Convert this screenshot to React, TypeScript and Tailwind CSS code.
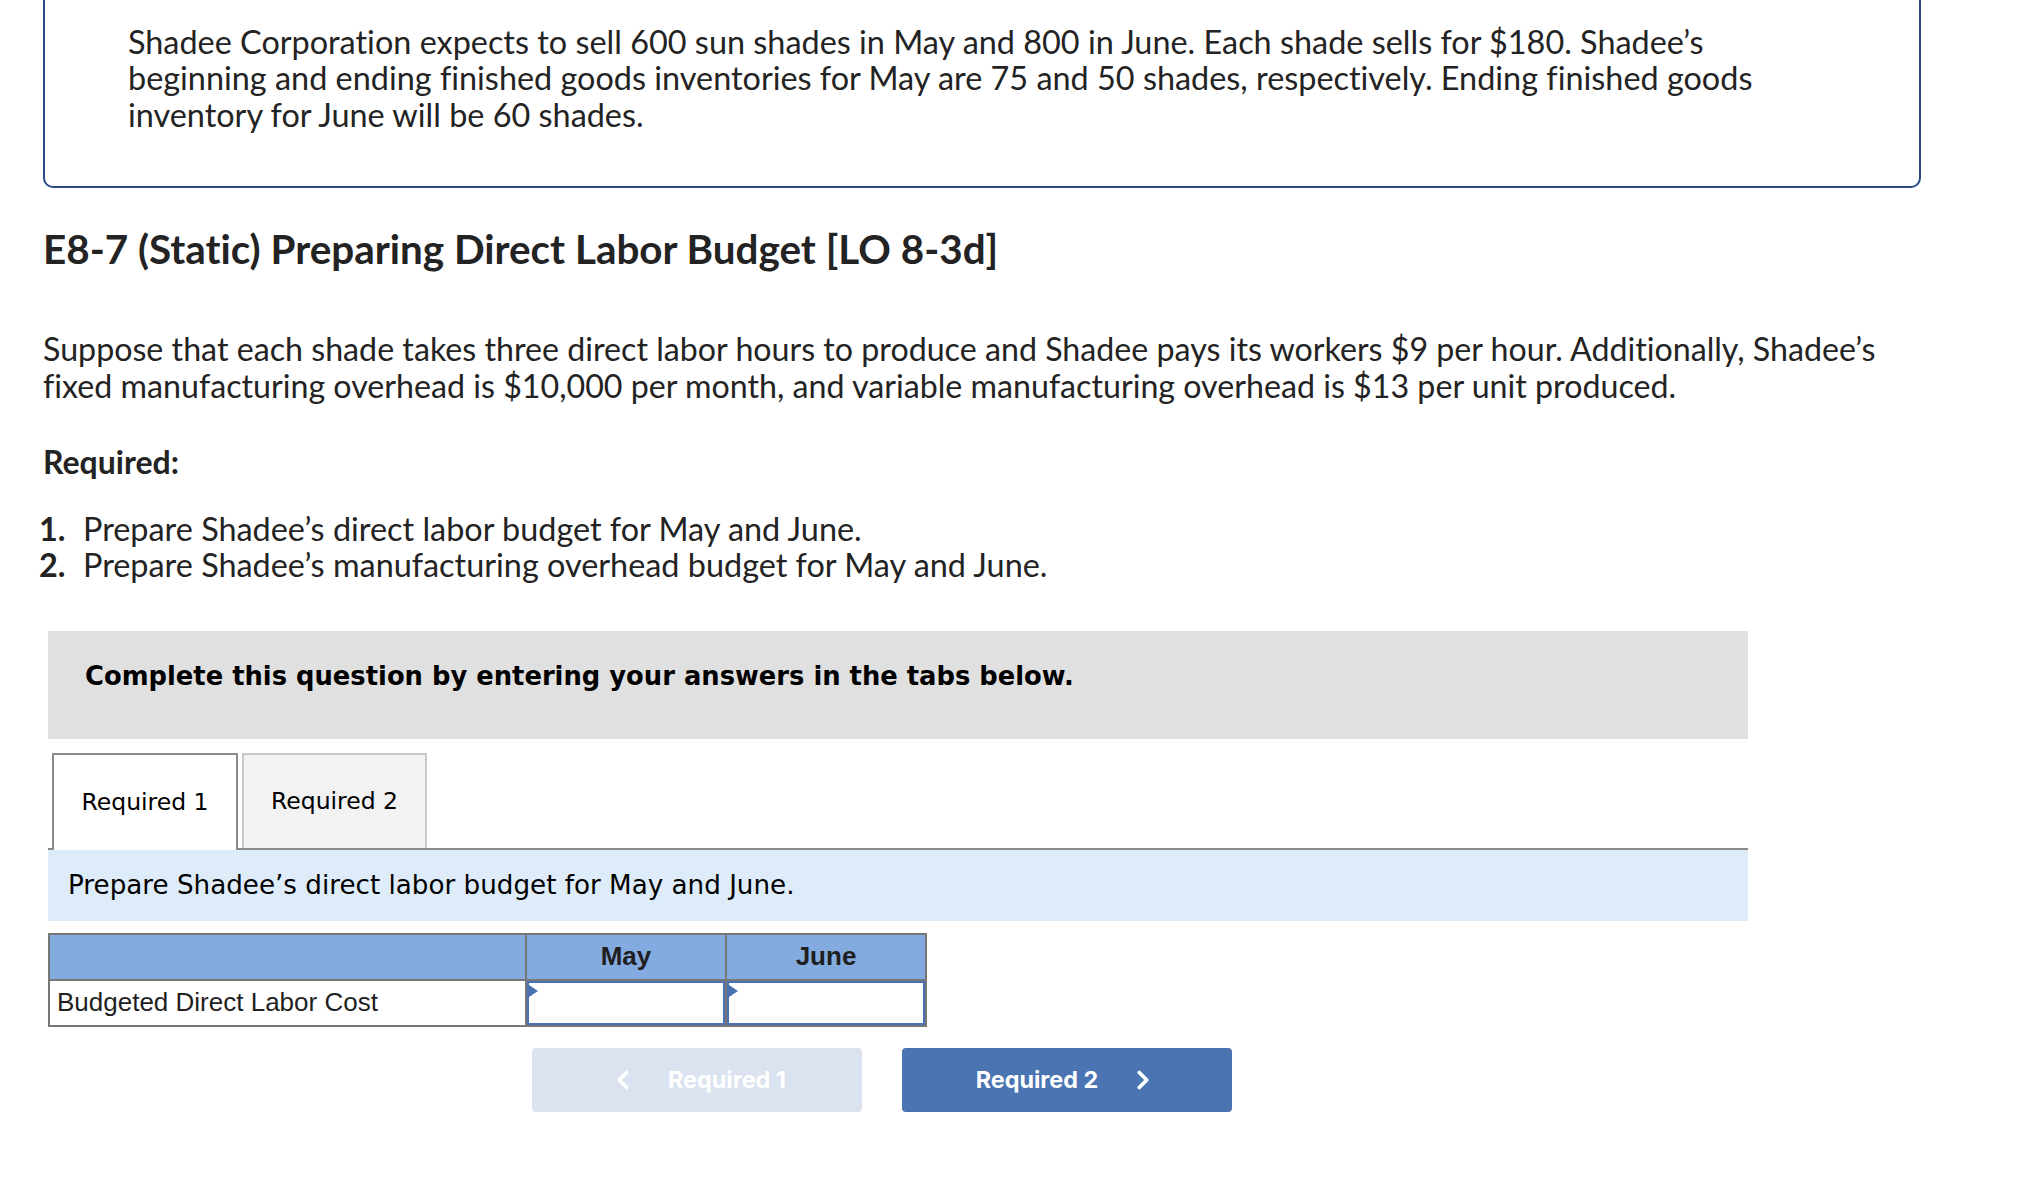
import { ChevronLeft, ChevronRight } from "lucide-react";

const proxima = "font-['Lato','Open_Sans',sans-serif] [font-variant-ligatures:none]";
const verdana = "font-['DejaVu_Sans','Verdana',sans-serif]";
const arial = "font-['Liberation_Sans','Arial',sans-serif]";

function AnswerCell() {
  return (
    <td className="border-2 border-[#777777] p-0 h-[46px]">
      <div className="relative h-full w-full border-2 border-[#4a72b2] bg-white">
        {/* little flag marking an input cell */}
        <span className="absolute left-0 top-[2px] h-0 w-0 border-y-[6px] border-l-[9px] border-y-transparent border-l-[#4a72b2]" />
      </div>
    </td>
  );
}

export default function App() {
  return (
    <div className="min-h-screen bg-white text-[#232323]">
      {/* Intro box (continued from above) */}
      <div
        className={`ml-[43px] w-[1878px] border-x-2 border-b-2 border-[#2a4a85] rounded-b-[10px] pl-[83px] pr-[120px] pt-[24px] pb-[53px] ${proxima} text-[32.4px] leading-[36.4px]`}
      >
        Shadee Corporation expects to sell 600 sun shades in May and 800 in June. Each shade sells for $180.
        Shadee’s beginning and ending finished goods inventories for May are 75 and 50 shades, respectively.
        Ending finished goods inventory for June will be 60 shades.
      </div>

      <div className={`pl-[43px] w-[1921px] ${proxima}`}>
        <h1 className="mt-[39px] text-[40.4px] leading-[44px] font-bold">
          E8-7 (Static) Preparing Direct Labor Budget [LO 8-3d]
        </h1>

        <p className="mt-[60px] text-[32.2px] leading-[36.4px]">
          Suppose that each shade takes three direct labor hours to produce and Shadee pays its workers $9 per
          hour. Additionally, Shadee’s fixed manufacturing overhead is $10,000 per month, and variable
          manufacturing overhead is $13 per unit produced.
        </p>

        <p className="mt-[40px] text-[32px] leading-[36px] font-bold">Required:</p>

        <ol className="mt-[31px] text-[32.4px] leading-[36.4px]">
          <li className="flex">
            <span className="w-[24px] -ml-[4px] text-right font-bold">1.</span>
            <span className="ml-[20px]">Prepare Shadee’s direct labor budget for May and June.</span>
          </li>
          <li className="flex">
            <span className="w-[24px] -ml-[4px] text-right font-bold">2.</span>
            <span className="ml-[20px]">Prepare Shadee’s manufacturing overhead budget for May and June.</span>
          </li>
        </ol>
      </div>

      {/* Question area */}
      <div className="ml-[48px] w-[1700px] mt-[47px]">
        <div className={`h-[108px] bg-[#e0e0e0] pl-[37px] pt-[30px] ${verdana} text-black`}>
          <p className="text-[25.8px] leading-[30px] font-bold">
            Complete this question by entering your answers in the tabs below.
          </p>
        </div>

        {/* Tabs */}
        <div className={`mt-[14px] flex items-end gap-[4px] pl-[4px] border-b-2 border-[#8a8a8a] ${verdana} text-black`}>
          <button
            type="button"
            className="-mb-[2px] h-[97px] w-[186px] border-x-2 border-t-2 border-[#8a8a8a] bg-white text-[23.5px]"
          >
            Required 1
          </button>
          <button
            type="button"
            className="h-[95px] w-[185px] border-x-2 border-t-2 border-[#c8c8c8] bg-[#f2f2f2] text-[23.5px]"
          >
            Required 2
          </button>
        </div>

        <div className={`h-[71px] bg-[#deebf8] pl-[20px] flex items-center ${verdana} text-[26.2px] text-black`}>
          Prepare Shadee’s direct labor budget for May and June.
        </div>

        {/* Budget table */}
        <table className={`mt-[12px] border-collapse border-2 border-[#777777] ${arial} text-[26px] text-[#1f1f1f]`}>
          <thead>
            <tr className="bg-[#84abdf] h-[46px]">
              <th className="w-[477px] border-2 border-[#777777]" />
              <th className="w-[200px] border-2 border-[#777777] font-bold">May</th>
              <th className="w-[200px] border-2 border-[#777777] font-bold">June</th>
            </tr>
          </thead>
          <tbody>
            <tr>
              <td className="border-2 border-[#777777] pl-[7px] h-[46px]">Budgeted Direct Labor Cost</td>
              <AnswerCell />
              <AnswerCell />
            </tr>
          </tbody>
        </table>

        {/* Navigation */}
        <div className="mt-[21px] ml-[484px] flex gap-[40px] font-['Inter',sans-serif] text-[23.4px] font-bold text-white">
          <button
            type="button"
            disabled
            className="h-[64px] w-[330px] rounded-[4px] bg-[#dae3ef] flex items-center justify-center gap-[30px]"
          >
            <ChevronLeft size={30} strokeWidth={3} />
            <span>Required 1</span>
          </button>
          <button
            type="button"
            className="h-[64px] w-[330px] rounded-[4px] bg-[#4a74b2] flex items-center justify-center gap-[30px]"
          >
            <span>Required 2</span>
            <ChevronRight size={30} strokeWidth={3} />
          </button>
        </div>
      </div>
    </div>
  );
}
